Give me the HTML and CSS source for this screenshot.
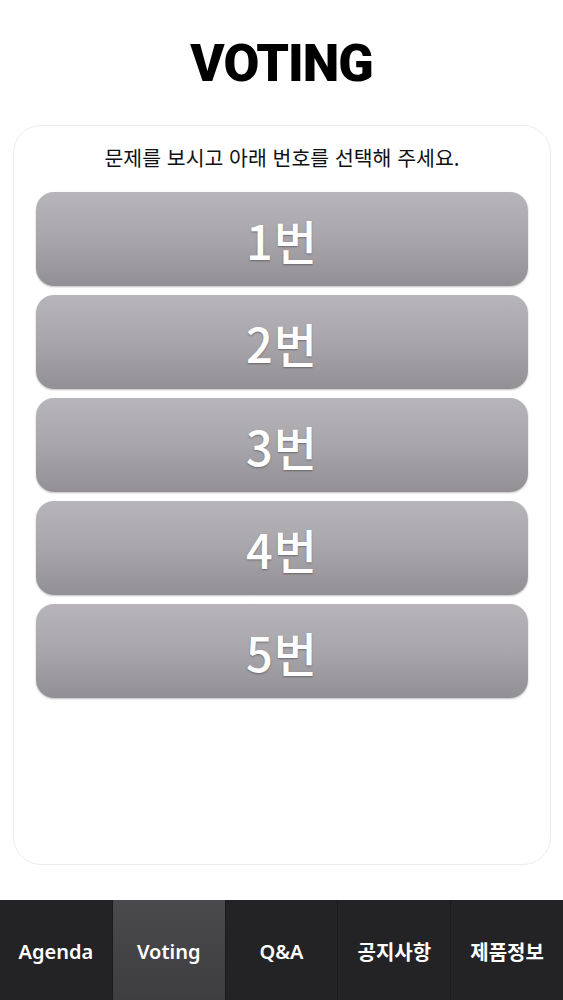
FILE: index.html
```html
<!DOCTYPE html>
<html lang="ko">

<head>
    <meta charset="utf-8">
    <title>VOTING</title>
    <link rel="stylesheet" href="styles.css">
</head>

<body>
    <div class="page">
        <h1 class="title">VOTING</h1>
        <div class="vote-card">
            <p class="guide">문제를 보시고 아래 번호를 선택해 주세요.</p>
            <div class="vote-list">
                <button class="vote-btn">1번</button>
                <button class="vote-btn">2번</button>
                <button class="vote-btn">3번</button>
                <button class="vote-btn">4번</button>
                <button class="vote-btn">5번</button>
            </div>
        </div>
        <nav class="tab-bar">
            <a class="tab">Agenda</a>
            <a class="tab active">Voting</a>
            <a class="tab">Q&amp;A</a>
            <a class="tab">공지사항</a>
            <a class="tab">제품정보</a>
        </nav>
    </div>
</body>

</html>
```

FILE: styles.css
```css
body {
    margin: 0;
    background-color: #fff;
    font-family: 'Noto Sans', 'Noto Sans CJK KR', sans-serif;
    color: #222;
}

.page {
    display: flex;
    flex-direction: column;
    min-height: 100vh;
}

.title {
    margin: 0;
    padding-top: 36px;
    height: 125px;
    box-sizing: border-box;
    text-align: center;
    font-family: 'Roboto', sans-serif;
    font-weight: 900;
    font-size: 52px;
    line-height: 56px;
    letter-spacing: -1px;
    color: #000;
}

.vote-card {
    margin: 0 12px 0 13px;
    height: 740px;
    box-sizing: border-box;
    border: 1px solid #ececef;
    border-radius: 28px;
    padding: 17px 22px;
    background-color: #fff;
}

.guide {
    margin: 0 0 20px;
    text-align: center;
    font-size: 20.5px;
    line-height: 29px;
    color: #111;
    font-family: 'Noto Sans CJK KR', sans-serif;
}

.vote-list {
    display: flex;
    flex-direction: column;
    gap: 9px;
}

.vote-btn {
    display: block;
    width: 100%;
    height: 94px;
    border: none;
    border-radius: 18px;
    background: linear-gradient(to bottom, #b7b5b9 0%, #a8a6aa 50%, #929094 100%);
    box-shadow: 0 1px 2px rgba(0, 0, 0, 0.25);
    color: #fff;
    font-family: 'Noto Sans CJK KR', sans-serif;
    font-size: 47px;
    font-weight: 500;
    letter-spacing: 1px;
    text-shadow: 0 1px 2px rgba(0, 0, 0, 0.35);
    cursor: pointer;
    padding: 0;
}

.tab-bar {
    margin-top: auto;
    display: flex;
    height: 100px;
    background-color: #232224;
}

.tab {
    flex: 1;
    display: flex;
    align-items: center;
    justify-content: center;
    padding-top: 2px;
    border-right: 1px solid #1b1a1c;
    color: #fff;
    font-family: 'Noto Sans', 'Noto Sans CJK KR', sans-serif;
    font-size: 20px;
    font-weight: 600;
}

.tab:last-child {
    border-right: none;
}

.tab.active {
    background: linear-gradient(to bottom, #4a494c, #3e3d40);
}
```
